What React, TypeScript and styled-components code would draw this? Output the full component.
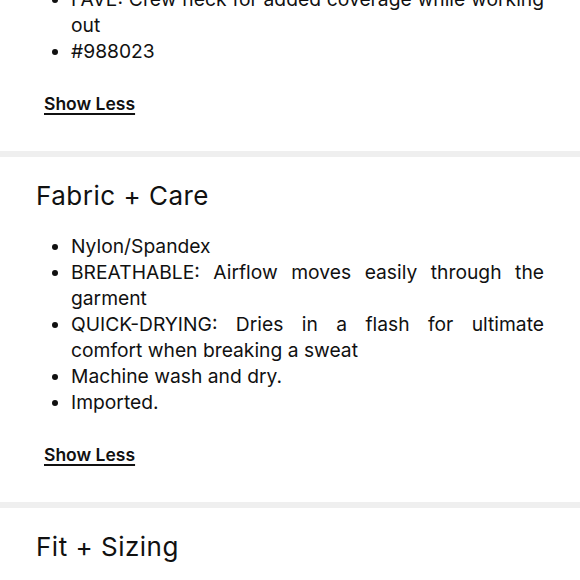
import React from 'react';
import styled, { createGlobalStyle } from 'styled-components';

const GlobalStyle = createGlobalStyle`
  body {
    margin: 0;
    background: #ffffff;
    color: #111111;
    font-family: Inter, "Noto Sans", sans-serif;
  }
`;

type Block = {
  title?: string;
  // every bullet is given as its lines, as they wrap in the design
  items?: string[][];
  showLess?: boolean;
};

const blocks: Block[] = [
  {
    items: [['FAVE: Crew neck for added coverage while working', 'out'], ['#988023']],
    showLess: true,
  },
  {
    title: 'Fabric + Care',
    items: [
      ['Nylon/Spandex'],
      ['BREATHABLE: Airflow moves easily through the', 'garment'],
      ['QUICK-DRYING: Dries in a flash for ultimate', 'comfort when breaking a sweat'],
      ['Machine wash and dry.'],
      ['Imported.'],
    ],
    showLess: true,
  },
  {
    title: 'Fit + Sizing',
  },
];

export default function App() {
  return (
    <>
      <GlobalStyle />
      <Page>
        {blocks.map((b, i) => (
          <Section key={i} $first={i === 0}>
            {b.title && <Heading>{b.title}</Heading>}
            {b.items && (
              <List $first={i === 0}>
                {b.items.map((lines) => (
                  <Item key={lines[0]}>
                    {lines.map((l, j) => (
                      <Line key={j} $full={j < lines.length - 1}>
                        {l}
                      </Line>
                    ))}
                  </Item>
                ))}
              </List>
            )}
            {b.showLess && <ShowLess href="#">Show Less</ShowLess>}
          </Section>
        ))}
      </Page>
    </>
  );
}

// the page is scrolled a little, the first bullet is cut at the top
const Page = styled.div`
  margin-top: -14px;
  display: flex;
  flex-direction: column;
`;

const Section = styled.section<{ $first?: boolean }>`
  display: flex;
  flex-direction: column;
  align-items: flex-start;
  padding: ${(p) => (p.$first ? '0' : '24px')} 36px 36px 36px;
  border-bottom: 6px solid #efefef;
`;

const Heading = styled.h2`
  margin: 0;
  font-size: 26px;
  line-height: 30px;
  font-weight: 400;
  letter-spacing: 0.5px;
`;

const List = styled.ul<{ $first?: boolean }>`
  align-self: stretch;
  margin: ${(p) => (p.$first ? '0' : '22px')} 0 0 0;
  padding: 0 0 0 35px;
`;

const Item = styled.li`
  font-size: 19.25px;
  line-height: 26px;
`;

const Line = styled.span<{ $full?: boolean }>`
  display: block;
  white-space: nowrap;
  text-align: ${(p) => (p.$full ? 'justify' : 'left')};
  text-align-last: ${(p) => (p.$full ? 'justify' : 'left')};
`;

const ShowLess = styled.a`
  margin: 29px 0 0 8px;
  font-size: 17.5px;
  line-height: 22px;
  font-weight: 600;
  color: #111111;
  text-decoration: underline;
  text-decoration-thickness: 1.5px;
  text-underline-offset: 3px;
`;
